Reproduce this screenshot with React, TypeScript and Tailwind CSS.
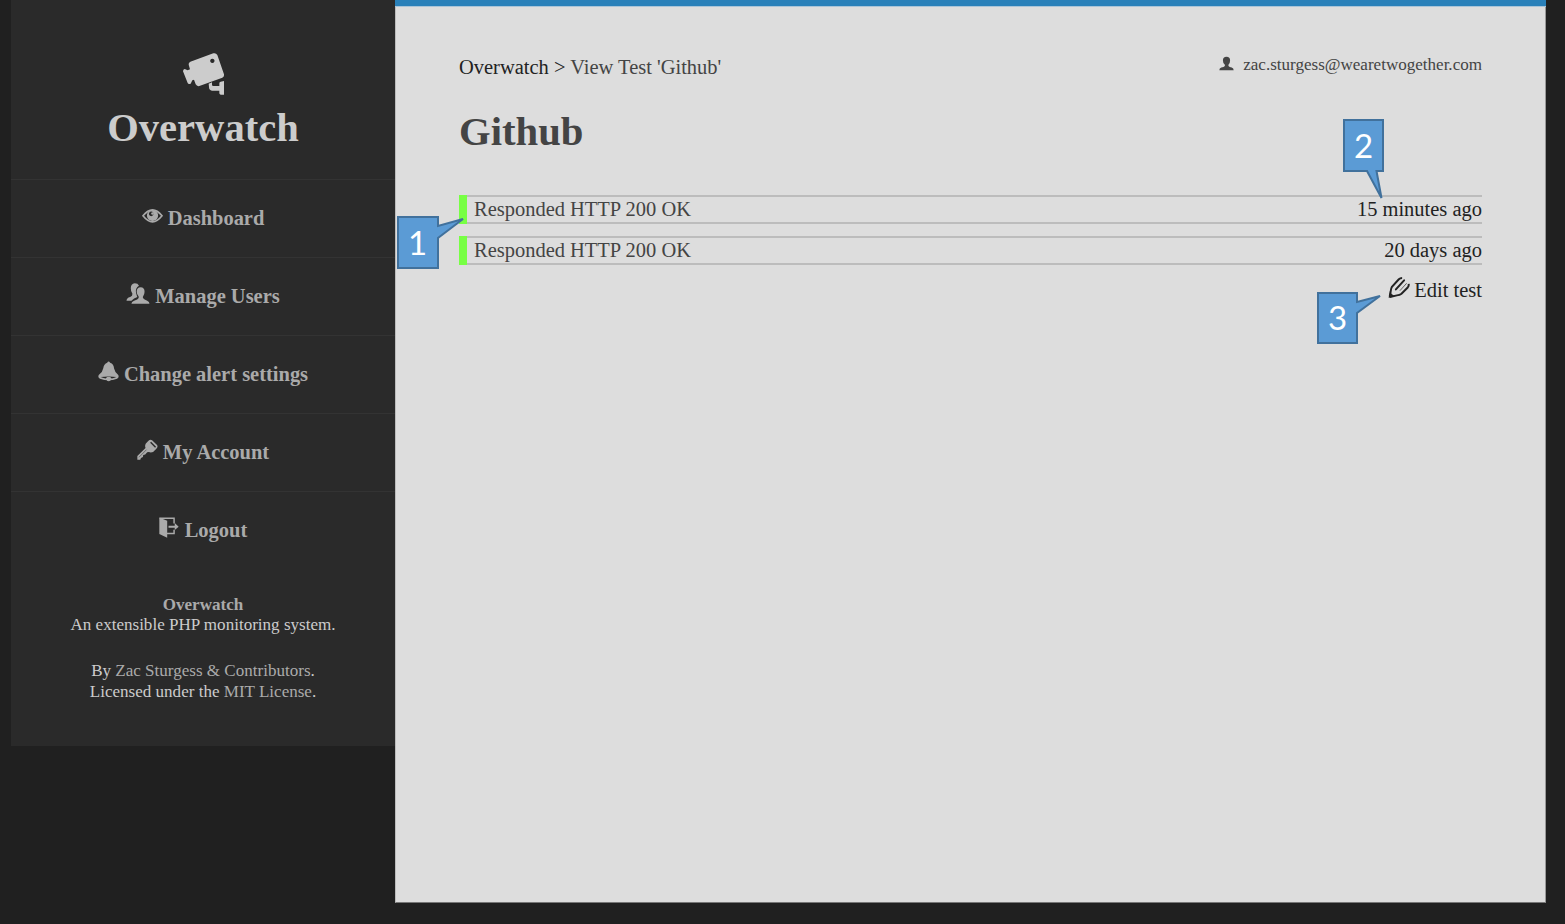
import type { ReactNode } from "react";

function CameraIcon() {
  return (
    <svg viewBox="276 36 129 132" className="block h-[44px] w-[43px]" fill="currentColor">
      <path
        fillRule="evenodd"
        d="M301 65 L370 40 Q378 38 382 45 L402 103 Q404 110 397 113 L328 138 Q321 140 317 133 L312 119 L307 121 L302 131 Q295 134 293 129 L279 94 Q279 88 284 87 L293 91 L300 88 L296 74 Q295 68 301 65 Z M367 56 a6.500 6.500 0 1 0 0.1 0 Z"
      />
      <path d="M356 131 L366 127 V134 Q366 138 370 138 H388 V130 Q388 126 392 125 L402 123 V164 H392 Q388 163 388 160 V152 H366 Q357 151 357 141 Z" />
    </svg>
  );
}

function EyeIcon() {
  return (
    <svg viewBox="65 40 64 44" className="h-[15px] w-[21px]">
      <path d="M68 63 Q97 27 126 63 Q97 100 68 63 Z" fill="none" stroke="currentColor" strokeWidth="5" />
      <path
        fill="currentColor"
        fillRule="evenodd"
        d="M97 45 a17 17 0 1 0 0.1 0 Z M93 50 a7 7 0 1 0 0.1 0 Z"
      />
      <circle cx="97" cy="56" r="4" fill="currentColor" />
    </svg>
  );
}

function UsersIcon() {
  return (
    <svg viewBox="20 264 72 64" className="h-[21px] w-[24px]" fill="currentColor">
      <path d="M34 280 Q34 266 46 265 Q56 265 59 272 Q47 279 50 294 Q52 303 54 307 Q43 310 36 318 H21 Q21 310 32 307 Q40 304 39 297 Q34 291 34 280 Z" />
      <path d="M52 291 Q52 277 64 277 Q76 277 76 291 Q76 300 71 306 V310 Q75 315 84 318 Q91 321 91 327 H36 Q36 321 44 318 Q56 315 58 310 V305 Q52 299 52 291 Z" />
    </svg>
  );
}

function BellIcon() {
  return (
    <svg viewBox="24 35 64 64" className="h-[21px] w-[21px]">
      <path
        fill="currentColor"
        d="M52 40 Q56 33 61 40 Q72 43 73 58 Q75 69 85 77 Q90 84 82 89 Q57 99 30 89 Q22 84 27 77 Q38 69 40 57 Q42 43 52 40 Z"
      />
      <path d="M32 84 Q57 80 80 84 Q75 87 66 88 Q56 80 47 88 Q38 87 32 84 Z" fill="#2a2a2a" />
      <circle cx="56.500" cy="90" r="7" fill="currentColor" />
    </svg>
  );
}

function KeyIcon() {
  return (
    <svg viewBox="139 267 64 66" className="h-[22px] w-[21px]">
      <path
        fill="currentColor"
        fillRule="evenodd"
        d="M174 272 Q179 267 185 270 L200 285 Q204 291 198 296 L188 306 Q181 309 175 306 L170 307 L164 314 L158 315 L157 321 L151 324 L149 330 H140 V318 L165 294 Q162 286 166 280 Z M182 275 L179 278 L194 293 L197 290 Z"
      />
      <path d="M145 322 L168 299" stroke="#2a2a2a" strokeWidth="1.500" />
    </svg>
  );
}

function LogoutIcon() {
  return (
    <svg viewBox="55 51 61 63" className="h-[21px] w-[20px]">
      <path d="M56 52 L80 62 V114 L56 102 Z" fill="currentColor" />
      <path d="M57 54 H101 V70 M101 89 V101 H79" fill="none" stroke="currentColor" strokeWidth="4.500" />
      <path d="M84 77 H103 V69 L115 80 L103 90 V83 H84 Z" fill="currentColor" />
    </svg>
  );
}

function UserIcon() {
  return (
    <svg viewBox="55 47 46 45" className="h-[15px] w-[15px]" fill="currentColor">
      <path d="M67 60 Q67 49 78 49 Q89 49 89 60 Q89 69 84 73 V77 Q87 80 94 82 Q100 84 100 90 H56 Q56 84 62 82 Q70 80 73 77 V73 Q67 69 67 60 Z" />
    </svg>
  );
}

function PencilIcon() {
  return (
    <svg viewBox="265 154 65 64" className="h-[21px] w-[22px]" fill="none" stroke="currentColor">
      <path d="M307 157 Q301 157 297 161 L276 184 Q273 189 272 199 L269 214" strokeWidth="6" />
      <path d="M313 164 L288 192" strokeWidth="6" strokeLinecap="round" />
      <path d="M327 175 Q328 181 324 186 L305 205 Q300 209 291 210 L270 215" strokeWidth="6" />
      <path d="M320 174 L301 195" strokeWidth="2" strokeLinecap="round" />
      <path d="M266 218 L270 198 Q273 206 284 212 Z" fill="currentColor" stroke="none" />
    </svg>
  );
}

function NavItem({ icon, label, last = false }: { icon: ReactNode; label: string; last?: boolean }) {
  return (
    <a
      className={
        last
          ? "flex h-[78px] items-center justify-center gap-[6px] border-t border-[#333333] pb-[2px]"
          : "flex h-[78px] items-center justify-center gap-[5px] border-t border-[#333333] pb-[2px]"
      }
    >
      <span className="-mt-[4px]">{icon}</span>
      <span className="text-[20.480px] leading-6 font-bold">{label}</span>
    </a>
  );
}

function ResultRow({ time }: { time: string }) {
  return (
    <div className="flex h-[29px]">
      <div className="w-2 bg-[#77ff44]" />
      <div className="flex flex-1 items-center justify-between border-y-2 border-[#bcbcbc] pl-[7px] leading-6">
        <span className="-mt-[2px] text-[#444444]">Responded HTTP 200 OK</span>
        <span className="-mt-px">{time}</span>
      </div>
    </div>
  );
}

function Callout({ place, box, path, label }: { place: string; box: string; path: string; label: string }) {
  return (
    <div className={"absolute " + place}>
      <svg viewBox={box} className="absolute inset-0 h-full w-full">
        <path d={path} fill="#5b9bd5" stroke="#41719c" strokeWidth="2" strokeMiterlimit="3" />
      </svg>
      <span className="relative flex h-[54px] w-[41px] items-center justify-center font-['Lato',sans-serif] text-[33px] text-white">
        {label}
      </span>
    </div>
  );
}

export default function App() {
  return (
    <div className="relative flex h-[924px] w-[1565px] items-start overflow-hidden bg-[#202020] pl-[11px] font-['Liberation_Serif',serif] text-[20.480px] whitespace-nowrap">
      <aside className="h-[746px] w-[384px] shrink-0 bg-[#2a2a2a] text-center text-[#aaaaaa]">
        <header className="flex h-[179px] flex-col items-center pt-[52px] text-[#cccccc]">
          <CameraIcon />
          <div className="mt-[8px] text-[40.600px] leading-[48px] font-bold">Overwatch</div>
        </header>
        <nav>
          <NavItem icon={<EyeIcon />} label="Dashboard" />
          <NavItem icon={<UsersIcon />} label="Manage Users" />
          <NavItem icon={<BellIcon />} label="Change alert settings" />
          <NavItem icon={<KeyIcon />} label="My Account" />
          <NavItem icon={<LogoutIcon />} label="Logout" last />
        </nav>
        <footer className="pt-[25.500px] text-[17.067px] leading-[20.500px] text-[#cccccc]">
          <p>
            <b className="text-[#aaaaaa]">Overwatch</b>
            <br />
            An extensible PHP monitoring system.
          </p>
          <p className="mt-[25.500px]">
            By <span className="text-[#aaaaaa]">Zac Sturgess &amp; Contributors</span>.
            <br />
            Licensed under the <span className="text-[#aaaaaa]">MIT License</span>.
          </p>
        </footer>
      </aside>

      <main className="h-[903px] w-[1151px] shrink-0 border-r border-b border-l border-r-[#999999] border-b-[#777777] border-l-[#bbbbbb] bg-[#dddddd] pr-[63px] pl-[63px] text-[#222222]">
        <div className="-mr-[64px] -ml-[64px] h-[7px] border-b border-[#a9c4d8] bg-[#2980b9]" />
        <div className="flex h-[92px] items-start justify-between pt-[48px]">
          <div className="leading-6">
            Overwatch &gt; <span className="text-[#444444]">View Test 'Github'</span>
          </div>
          <div className="flex items-center text-[17.067px] leading-5 text-[#444444]">
            <span className="-mt-1 mr-[9px]">
              <UserIcon />
            </span>
            zac.sturgess@wearetwogether.com
          </div>
        </div>
        <h1 className="mt-[9px] h-[87px] text-[40.700px] leading-[48px] font-bold text-[#444444]">Github</h1>
        <div className="flex flex-col gap-3">
          <ResultRow time="15 minutes ago" />
          <ResultRow time="20 days ago" />
        </div>
        <div className="mt-[13px] flex items-center justify-end gap-1 leading-6">
          <span className="-mt-[6px]">
            <PencilIcon />
          </span>
          Edit test
        </div>
      </main>

      <Callout
        place="top-[216px] left-[397px] h-[54px] w-[70px]"
        box="0 0 70 54"
        path="M1 1 H41 V10 L66 3 L41 22 V52 H1 Z"
        label="1"
      />
      <Callout
        place="top-[119px] left-[1343px] h-[84px] w-[44px]"
        box="0 0 44 84"
        path="M1 1 H40 V52 H33.500 L38.500 79 L24 52 H1 Z"
        label="2"
      />
      <Callout
        place="top-[291px] left-[1317px] h-[54px] w-[67px]"
        box="0 -1 67 54"
        path="M1 1 H40 V10 L63 4 L40 21 V51 H1 Z"
        label="3"
      />
    </div>
  );
}
